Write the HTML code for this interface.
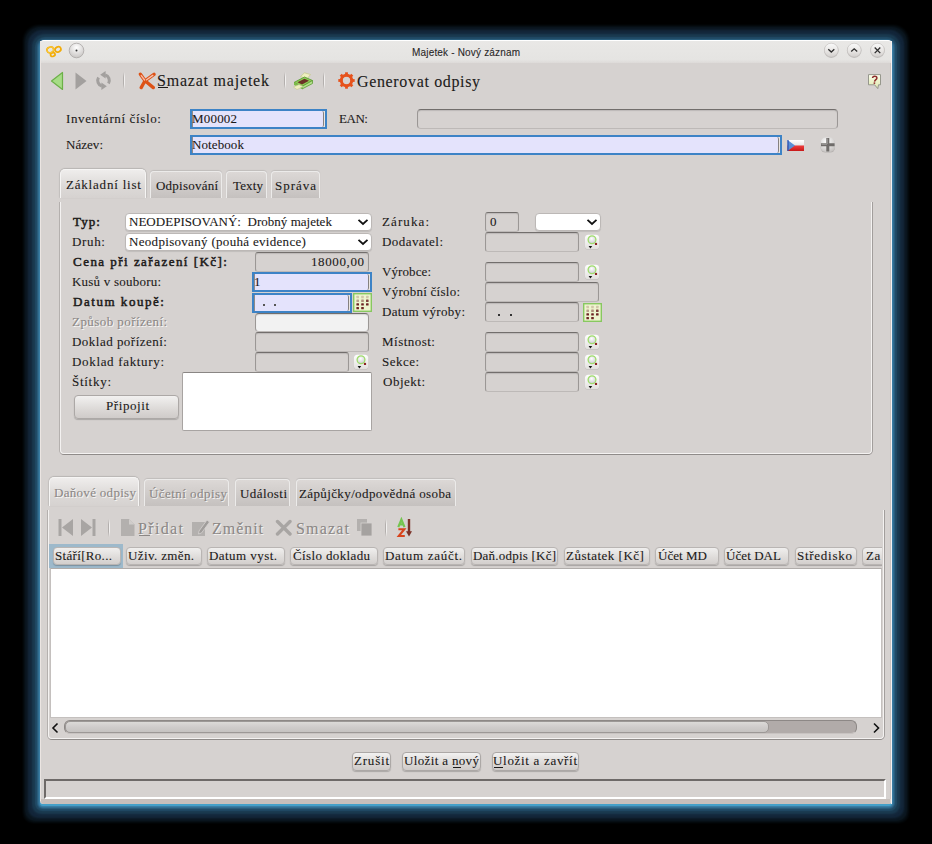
<!DOCTYPE html>
<html><head><meta charset="utf-8"><title>Majetek - Nový záznam</title>
<style>
html,body{margin:0;padding:0;width:932px;height:844px;overflow:hidden;background:#000;font-family:'Liberation Serif', serif}
body div{position:absolute}
.t{white-space:pre;-webkit-text-stroke:0.1px currentColor}
</style></head><body>
<div style="left:40px;top:40px;width:852px;height:764px;box-shadow:0 2px 0 0 #44a0c8,0 2px 1px 1px #3b7fa6,0 2px 1px 2px #326f93,0 2px 1px 3px #2a5c7c,0 2px 1px 5px #214a64,0 2px 2px 8px #1a3a50,0 2px 2px 12px #13263a,0 2px 2px 15px #0c1822,0 2px 2px 17px #060c10;border-radius:5px 5px 3px 3px;background:#d6d2d0"></div>
<div style="left:40px;top:40px;width:852px;height:23px;background:linear-gradient(#e9e8e6,#e5e4e2 85%,#dddad8);border-radius:4px 4px 0 0;border-top:1px solid #fff;box-sizing:border-box"></div>
<div style="left:40px;top:41px;width:1px;height:760px;background:#ebe5e2"></div>
<div style="left:890px;top:63px;width:1px;height:736px;background:#cbc4c0"></div>
<div style="left:891px;top:41px;width:1px;height:763px;background:#f4f2f1"></div>
<div style="left:41px;top:799px;width:849px;height:5px;background:#c6bfbb;border-radius:0 0 0 3px"></div>
<svg style="position:absolute;left:44px;top:43px" width="20" height="17" viewBox="0 0 20 17"><g fill="none" stroke="#f2ac0a" stroke-width="1.7">
<ellipse cx="6.3" cy="6.9" rx="3.4" ry="2.9" transform="rotate(-20 6.3 6.9)"/><ellipse cx="14" cy="6.4" rx="3" ry="2.5" transform="rotate(-25 14 6.4)"/><ellipse cx="8.8" cy="11.6" rx="2.3" ry="1.8" transform="rotate(-20 8.8 11.6)"/></g>
<g fill="none" stroke="#ffd84a" stroke-width="0.6"><ellipse cx="6.3" cy="6.9" rx="3.4" ry="2.9" transform="rotate(-20 6.3 6.9)"/></g></svg>
<svg style="position:absolute;left:68px;top:42px" width="17" height="17" viewBox="0 0 17 17"><defs><radialGradient id="rg1" cx="50%" cy="30%" r="70%"><stop offset="0" stop-color="#ffffff"/><stop offset="1" stop-color="#c9c6c4"/></radialGradient></defs>
<circle cx="8.5" cy="8.5" r="7.3" fill="url(#rg1)" stroke="#a9a6a4" stroke-width="0.8"/><circle cx="8.5" cy="8.5" r="1" fill="#333"/></svg>
<svg style="position:absolute;left:823px;top:42px" width="16" height="17" viewBox="0 0 16 17"><defs><linearGradient id="rgwmin" x1="0" y1="0" x2="0" y2="1"><stop offset="0" stop-color="#fafafa"/><stop offset="0.6" stop-color="#e6e4e2"/><stop offset="1" stop-color="#d2cfcd"/></linearGradient></defs>
<circle cx="8.3" cy="8.6" r="7.3" fill="#9e9b99" opacity="0.55"/><circle cx="8.3" cy="8.1" r="6.9" fill="url(#rgwmin)" stroke="#c2bfbd" stroke-width="0.5"/><g transform="translate(0.3,0)"><polyline points="5,7.2 8,10 11,7.2" fill="none" stroke="#2e2e2e" stroke-width="1.3"/></g></svg>
<svg style="position:absolute;left:846px;top:42px" width="16" height="17" viewBox="0 0 16 17"><defs><linearGradient id="rgwmax" x1="0" y1="0" x2="0" y2="1"><stop offset="0" stop-color="#fafafa"/><stop offset="0.6" stop-color="#e6e4e2"/><stop offset="1" stop-color="#d2cfcd"/></linearGradient></defs>
<circle cx="8.2" cy="8.6" r="7.3" fill="#9e9b99" opacity="0.55"/><circle cx="8.2" cy="8.1" r="6.9" fill="url(#rgwmax)" stroke="#c2bfbd" stroke-width="0.5"/><g transform="translate(0.2,0)"><polyline points="5,9.6 8,6.8 11,9.6" fill="none" stroke="#2e2e2e" stroke-width="1.3"/></g></svg>
<svg style="position:absolute;left:869px;top:42px" width="16" height="17" viewBox="0 0 16 17"><defs><linearGradient id="rgwclose" x1="0" y1="0" x2="0" y2="1"><stop offset="0" stop-color="#fafafa"/><stop offset="0.6" stop-color="#e6e4e2"/><stop offset="1" stop-color="#d2cfcd"/></linearGradient></defs>
<circle cx="8.5" cy="8.6" r="7.3" fill="#9e9b99" opacity="0.55"/><circle cx="8.5" cy="8.1" r="6.9" fill="url(#rgwclose)" stroke="#c2bfbd" stroke-width="0.5"/><g transform="translate(0.5,0)"><path d="M5.2,5.5 L10.8,11.1 M10.8,5.5 L5.2,11.1" stroke="#2e2e2e" stroke-width="1.3"/></g></svg>
<div class="t" style="left:412px;top:48px;font-family:'Liberation Sans', sans-serif;font-size:10px;line-height:10px;color:#2a2828;letter-spacing:0.18px;">Majetek - Nový záznam</div>
<svg style="position:absolute;left:50px;top:71px" width="14" height="20" viewBox="0 0 14 20"><polygon points="1.5,10 12.5,1.5 12.5,18.5" fill="#a6dc86" stroke="#6cb048" stroke-width="1.2" stroke-linejoin="round"/></svg>
<svg style="position:absolute;left:74px;top:71px" width="14" height="20" viewBox="0 0 14 20"><polygon points="1.5,1.5 12.5,10 1.5,18.5" fill="#a3a09e"/></svg>
<svg style="position:absolute;left:95px;top:71px" width="18" height="19" viewBox="0 0 18 19"><g fill="none" stroke="#a3a09e" stroke-width="3">
<path d="M10.2,3.9 A5.8,5.8 0 0 1 13.5,12.4"/><path d="M6.8,15.1 A5.8,5.8 0 0 1 3.5,6.6"/></g>
<polygon points="5.2,3.7 10.6,0 10.6,7.4" fill="#a3a09e"/><polygon points="11.8,15.3 6.4,11.6 6.4,19" fill="#a3a09e"/></svg>
<div style="left:123px;top:72px;width:1px;height:17px;background:linear-gradient(#d6d2d0,#b3afad 30%,#b3afad 70%,#d6d2d0)"></div>
<div style="left:124px;top:72px;width:1px;height:17px;background:linear-gradient(#d6d2d0,#f2f0ef 30%,#f2f0ef 70%,#d6d2d0)"></div>
<svg style="position:absolute;left:138px;top:72px" width="18" height="18" viewBox="0 0 18 18"><g fill="none" stroke-linecap="round" stroke-linejoin="round">
<path d="M2.4,2.2 L7,8.8 L15.3,15.6 M16,2.3 L7,8.8 L3.2,15.6" stroke="#dd5216" stroke-width="3.3"/>
<path d="M3.3,3.6 L6.6,8" stroke="#f7b8a4" stroke-width="1.4"/><path d="M14.8,3.4 L8.6,7.8" stroke="#f6c2ae" stroke-width="1.4"/></g></svg>
<div class="t" style="left:157px;top:73px;font-family:'Liberation Serif', serif;font-size:16px;line-height:16px;color:#1c1a19;letter-spacing:0.79px;">Smazat majetek</div>
<div style="left:158px;top:87px;width:10px;height:1px;background:#1c1a19"></div>
<div style="left:284px;top:72px;width:1px;height:17px;background:linear-gradient(#d6d2d0,#b3afad 30%,#b3afad 70%,#d6d2d0)"></div>
<div style="left:285px;top:72px;width:1px;height:17px;background:linear-gradient(#d6d2d0,#f2f0ef 30%,#f2f0ef 70%,#d6d2d0)"></div>
<svg style="position:absolute;left:293px;top:72px" width="21" height="18" viewBox="0 0 21 18"><polygon points="7.5,4.5 11.5,0.8 17.5,2.5 14,7" fill="#eef0c0" stroke="#c4c890" stroke-width="0.8"/>
<polygon points="1,10.5 11.5,5 19.5,8.5 9,14.5" fill="#90cc58" stroke="#5c9c34" stroke-width="0.9" stroke-linejoin="round"/>
<polygon points="4.5,10.3 11.5,6.8 16,8.8 9,12.6" fill="#6c3226"/>
<polygon points="9,14.5 19.5,8.5 19.5,11.5 9,17" fill="#b4e08a" stroke="#5c9c34" stroke-width="0.8" stroke-linejoin="round"/>
<polygon points="1,10.5 9,14.5 9,17 1,13" fill="#7cbc48"/>
<polygon points="0.5,15 6,12.6 10,14.6 4,17.6" fill="#eef0c0" stroke="#c4c890" stroke-width="0.6"/></svg>
<div style="left:323px;top:72px;width:1px;height:17px;background:linear-gradient(#d6d2d0,#b3afad 30%,#b3afad 70%,#d6d2d0)"></div>
<div style="left:324px;top:72px;width:1px;height:17px;background:linear-gradient(#d6d2d0,#f2f0ef 30%,#f2f0ef 70%,#d6d2d0)"></div>
<svg style="position:absolute;left:338px;top:72px" width="17" height="17" viewBox="0 0 17 17"><rect x="7.1" y="0.3" width="2.8" height="4" fill="#e6521c" transform="rotate(0 8.5 8.5)"/><rect x="7.1" y="0.3" width="2.8" height="4" fill="#e6521c" transform="rotate(45 8.5 8.5)"/><rect x="7.1" y="0.3" width="2.8" height="4" fill="#e6521c" transform="rotate(90 8.5 8.5)"/><rect x="7.1" y="0.3" width="2.8" height="4" fill="#e6521c" transform="rotate(135 8.5 8.5)"/><rect x="7.1" y="0.3" width="2.8" height="4" fill="#e6521c" transform="rotate(180 8.5 8.5)"/><rect x="7.1" y="0.3" width="2.8" height="4" fill="#e6521c" transform="rotate(225 8.5 8.5)"/><rect x="7.1" y="0.3" width="2.8" height="4" fill="#e6521c" transform="rotate(270 8.5 8.5)"/><rect x="7.1" y="0.3" width="2.8" height="4" fill="#e6521c" transform="rotate(315 8.5 8.5)"/><circle cx="8.5" cy="8.5" r="5.2" fill="none" stroke="#e6521c" stroke-width="3"/></svg>
<div class="t" style="left:357px;top:74px;font-family:'Liberation Serif', serif;font-size:16px;line-height:16px;color:#1c1a19;letter-spacing:0.65px;">Generovat odpisy</div>
<svg style="position:absolute;left:866px;top:73px" width="17" height="17" viewBox="0 0 17 17"><defs><linearGradient id="hlg" x1="0" y1="0" x2="0" y2="1"><stop offset="0" stop-color="#fbfdf0"/><stop offset="0.45" stop-color="#eef4cc"/><stop offset="1" stop-color="#dfe8b4"/></linearGradient></defs>
<path d="M2.5,1.6 H14.5 V11.8 H12.5 L11.8,15.6 L8.6,11.8 H2.5 Z" fill="url(#hlg)" stroke="#8d8f84" stroke-width="0.9" stroke-linejoin="round"/>
<path d="M6.6,5 C6.6,2.8 10.9,2.6 10.9,4.9 C10.9,6.5 8.8,6.6 8.5,8.6" fill="none" stroke="#8e2c2c" stroke-width="1.5"/>
<circle cx="8.4" cy="10.1" r="0.95" fill="#8e2c2c"/></svg>
<div class="t" style="left:66px;top:112px;font-family:'Liberation Serif', serif;font-size:13px;line-height:13px;color:#1c1a19;letter-spacing:0.63px;">Inventární číslo:</div>
<div style="left:190px;top:109px;width:137px;height:20px;box-sizing:border-box;background:#3d83c6"></div>
<div style="left:192px;top:111px;width:133px;height:16px;background:#ebe6e2"></div>
<div style="left:192px;top:111px;width:132px;height:16px;box-sizing:border-box;background:#e4e3fc;border-left:1px solid #8e8a88;border-right:1px solid #858180;border-radius:0 2px 2px 0"></div>
<div class="t" style="left:192px;top:112px;font-family:'Liberation Serif', serif;font-size:13px;line-height:13px;color:#1c1a19;letter-spacing:0.19px;">M00002</div>
<div class="t" style="left:339px;top:112px;font-family:'Liberation Serif', serif;font-size:13px;line-height:13px;color:#1c1a19;letter-spacing:-0.45px;">EAN:</div>
<div style="left:417px;top:109px;width:421px;height:20px;box-sizing:border-box;background:#d6d2d0;border-radius:4px;border:1px solid #9b9795;border-top-color:#726e6c;border-bottom-color:#bdb9b7;box-shadow:inset 0 1px 1px rgba(0,0,0,.12)"></div>
<div class="t" style="left:66px;top:138px;font-family:'Liberation Serif', serif;font-size:13px;line-height:13px;color:#1c1a19;letter-spacing:0.04px;">Název:</div>
<div style="left:190px;top:135px;width:592px;height:20px;box-sizing:border-box;background:#3d83c6"></div>
<div style="left:192px;top:137px;width:588px;height:16px;background:#ebe6e2"></div>
<div style="left:192px;top:137px;width:587px;height:16px;box-sizing:border-box;background:#e4e3fc;border-left:1px solid #8e8a88;border-right:1px solid #858180;border-radius:0 2px 2px 0"></div>
<div class="t" style="left:192px;top:138px;font-family:'Liberation Serif', serif;font-size:13px;line-height:13px;color:#1c1a19;letter-spacing:0.10px;">Notebook</div>
<svg style="position:absolute;left:787px;top:139px" width="18" height="13" viewBox="0 0 18 13"><defs><linearGradient id="flw" x1="0" y1="0" x2="0" y2="1"><stop offset="0" stop-color="#ffffff"/><stop offset="1" stop-color="#e6e6e6"/></linearGradient>
<linearGradient id="flr" x1="0" y1="0" x2="0" y2="1"><stop offset="0" stop-color="#f04040"/><stop offset="1" stop-color="#c81818"/></linearGradient></defs>
<rect x="0.5" y="1" width="16.5" height="5.5" fill="url(#flw)"/><rect x="0.5" y="6.5" width="16.5" height="5.5" fill="url(#flr)"/>
<polygon points="0.5,1 8,6.5 0.5,12" fill="#5b8fd6"/><rect x="0.5" y="1" width="1" height="11" fill="#1b40a8"/></svg>
<svg style="position:absolute;left:819px;top:136px" width="18" height="18" viewBox="0 0 18 18"><defs><radialGradient id="plg" cx="40%" cy="30%" r="75%"><stop offset="0" stop-color="#ffffff"/><stop offset="1" stop-color="#c4c1bf"/></radialGradient></defs>
<rect x="1.6" y="2.2" width="14.4" height="14.4" rx="5" fill="#9d9a98" opacity="0.6"/>
<rect x="1.6" y="1.6" width="14.4" height="14.4" rx="5" fill="url(#plg)"/>
<path d="M8.8,2 V15.6 M2,8.8 H15.6" stroke="#6f6c6a" stroke-width="3"/>
<path d="M8.2,2.5 V8 M2.5,8.2 H8" stroke="#b0adab" stroke-width="0.8"/></svg>
<div style="left:60px;top:202px;width:812px;height:252px;box-sizing:border-box;border-radius:0 0 4px 4px;border:1px solid #f4f2f1;border-top:none;box-shadow:-1px 0 0 #b4b0ae, 0 1px 0 #8f8b89, 1px 0 0 #a29e9c"></div>
<div style="left:150px;top:171px;width:72px;height:27px;box-sizing:border-box;border-radius:4px 4px 0 0;background:linear-gradient(#dcd8d6,#ccc8c6 70%,#c5c1bf);border:1px solid #ecebea;border-bottom:none;box-shadow:0 -1px 1px rgba(0,0,0,.10)"></div>
<div style="left:226px;top:171px;width:41px;height:27px;box-sizing:border-box;border-radius:4px 4px 0 0;background:linear-gradient(#dcd8d6,#ccc8c6 70%,#c5c1bf);border:1px solid #ecebea;border-bottom:none;box-shadow:0 -1px 1px rgba(0,0,0,.10)"></div>
<div style="left:271px;top:171px;width:49px;height:27px;box-sizing:border-box;border-radius:4px 4px 0 0;background:linear-gradient(#dcd8d6,#ccc8c6 70%,#c5c1bf);border:1px solid #ecebea;border-bottom:none;box-shadow:0 -1px 1px rgba(0,0,0,.10)"></div>
<div style="left:60px;top:169px;width:86px;height:29px;box-sizing:border-box;border-radius:5px 5px 0 0;background:linear-gradient(#efedec,#dcd9d7 60%,#d6d2d0);border:1px solid #f6f5f4;border-bottom:none;box-shadow:0 -1px 1px rgba(0,0,0,.12), -1px 0 1px rgba(0,0,0,.08), 1px 0 1px rgba(0,0,0,.08)"></div>
<div class="t" style="left:66px;top:178px;font-family:'Liberation Serif', serif;font-size:13px;line-height:13px;color:#1c1a19;letter-spacing:0.80px;">Základní list</div>
<div class="t" style="left:156px;top:179px;font-family:'Liberation Serif', serif;font-size:13px;line-height:13px;color:#1c1a19;letter-spacing:0.23px;">Odpisování</div>
<div class="t" style="left:233px;top:179px;font-family:'Liberation Serif', serif;font-size:13px;line-height:13px;color:#1c1a19;letter-spacing:0.14px;">Texty</div>
<div class="t" style="left:275px;top:179px;font-family:'Liberation Serif', serif;font-size:13px;line-height:13px;color:#1c1a19;letter-spacing:0.98px;">Správa</div>
<div class="t" style="left:73px;top:215px;font-family:'Liberation Serif', serif;font-size:13px;line-height:13px;color:#1c1a19;letter-spacing:1.11px;-webkit-text-stroke:0.5px currentColor;">Typ:</div>
<div style="left:125px;top:213px;width:247px;height:18px;box-sizing:border-box;background:#fff;border-radius:4px;border:1px solid #bcb8b6;box-shadow:0 1px 1px rgba(0,0,0,.10)"></div>
<svg style="position:absolute;left:357px;top:218px" width="12" height="8" viewBox="0 0 12 8"><polyline points="1.5,1.8 6,6 10.5,1.8" fill="none" stroke="#111" stroke-width="1.8"/></svg>
<div class="t" style="left:129px;top:215px;font-family:'Liberation Serif', serif;font-size:13px;line-height:13px;color:#1c1a19;letter-spacing:0.02px;">NEODEPISOVANÝ:  Drobný majetek</div>
<div class="t" style="left:72px;top:235px;font-family:'Liberation Serif', serif;font-size:13px;line-height:13px;color:#1c1a19;letter-spacing:0.66px;">Druh:</div>
<div style="left:125px;top:233px;width:247px;height:18px;box-sizing:border-box;background:#fff;border-radius:4px;border:1px solid #bcb8b6;box-shadow:0 1px 1px rgba(0,0,0,.10)"></div>
<svg style="position:absolute;left:357px;top:238px" width="12" height="8" viewBox="0 0 12 8"><polyline points="1.5,1.8 6,6 10.5,1.8" fill="none" stroke="#111" stroke-width="1.8"/></svg>
<div class="t" style="left:129px;top:235px;font-family:'Liberation Serif', serif;font-size:13px;line-height:13px;color:#1c1a19;letter-spacing:0.31px;">Neodpisovaný (pouhá evidence)</div>
<div class="t" style="left:73px;top:255px;font-family:'Liberation Serif', serif;font-size:13px;line-height:13px;color:#1c1a19;letter-spacing:1.47px;-webkit-text-stroke:0.5px currentColor;">Cena při zařazení [Kč]:</div>
<div style="left:255px;top:252px;width:114px;height:20px;box-sizing:border-box;background:#d6d2d0;border-radius:3px;border:1px solid #9b9795;border-top-color:#726e6c;border-bottom-color:#bdb9b7;box-shadow:inset 0 1px 1px rgba(0,0,0,.12)"></div>
<div class="t" style="left:311px;top:255px;font-family:'Liberation Serif', serif;font-size:13px;line-height:13px;color:#1c1a19;letter-spacing:0.61px;">18000,00</div>
<div class="t" style="left:72px;top:275px;font-family:'Liberation Serif', serif;font-size:13px;line-height:13px;color:#1c1a19;letter-spacing:0.22px;">Kusů v souboru:</div>
<div style="left:252px;top:272px;width:120px;height:20px;box-sizing:border-box;background:#3d83c6"></div>
<div style="left:254px;top:274px;width:116px;height:16px;background:#ebe6e2"></div>
<div style="left:254px;top:274px;width:115px;height:16px;box-sizing:border-box;background:#e4e3fc;border-left:1px solid #8e8a88;border-right:1px solid #858180;border-radius:0 2px 2px 0"></div>
<div class="t" style="left:254px;top:275px;font-family:'Liberation Serif', serif;font-size:13px;line-height:13px;color:#1c1a19;letter-spacing:0.00px;">1</div>
<div class="t" style="left:73px;top:295px;font-family:'Liberation Serif', serif;font-size:13px;line-height:13px;color:#1c1a19;letter-spacing:1.54px;-webkit-text-stroke:0.5px currentColor;">Datum koupě:</div>
<div style="left:252px;top:293px;width:100px;height:20px;box-sizing:border-box;background:#3d83c6"></div>
<div style="left:254px;top:295px;width:96px;height:16px;background:#ebe6e2"></div>
<div style="left:254px;top:295px;width:95px;height:16px;box-sizing:border-box;background:#e4e3fc;border-left:1px solid #8e8a88;border-right:1px solid #858180;border-radius:0 2px 2px 0"></div>
<svg style="position:absolute;left:353px;top:293px" width="19" height="19" viewBox="0 0 19 19"><rect x="0.7" y="0.7" width="17.6" height="17.6" fill="#eef4cf" stroke="#88c860" stroke-width="1.4"/><rect x="3.4" y="2.8" width="2.6" height="2.4" rx="0.5" fill="#6e2424" opacity="0.22"/><rect x="8.2" y="2.8" width="2.6" height="2.4" rx="0.5" fill="#6e2424" opacity="0.22"/><rect x="13.0" y="2.8" width="2.6" height="2.4" rx="0.5" fill="#6e2424" opacity="0.22"/><rect x="3.4" y="6.5" width="2.6" height="2.4" rx="0.5" fill="#6e2424" opacity="0.4"/><rect x="8.2" y="6.5" width="2.6" height="2.4" rx="0.5" fill="#6e2424" opacity="0.5"/><rect x="13.0" y="6.5" width="2.6" height="2.4" rx="0.5" fill="#6e2424" opacity="0.85"/><rect x="3.4" y="10.2" width="2.6" height="2.4" rx="0.5" fill="#6e2424" opacity="1"/><rect x="8.2" y="10.2" width="2.6" height="2.4" rx="0.5" fill="#6e2424" opacity="1"/><rect x="13.0" y="10.2" width="2.6" height="2.4" rx="0.5" fill="#6e2424" opacity="1"/><rect x="3.4" y="13.9" width="2.6" height="2.4" rx="0.5" fill="#6e2424" opacity="1"/><rect x="8.2" y="13.9" width="2.6" height="2.4" rx="0.5" fill="#6e2424" opacity="1"/></svg>
<div style="left:263px;top:304px;width:2px;height:2px;background:#555"></div><div style="left:274px;top:304px;width:2px;height:2px;background:#555"></div>
<div class="t" style="left:72px;top:315px;font-family:'Liberation Serif', serif;font-size:13px;line-height:13px;color:#8c8886;letter-spacing:0.44px;text-shadow:1px 1px 0 #f7f6f5">Způsob pořízení:</div>
<div style="left:255px;top:313px;width:114px;height:19px;box-sizing:border-box;background:#f2f2f2;border-radius:4px;border:1px solid #9b9795;border-top-color:#726e6c;border-bottom-color:#bdb9b7;box-shadow:inset 0 1px 1px rgba(0,0,0,.12)"></div>
<div class="t" style="left:72px;top:335px;font-family:'Liberation Serif', serif;font-size:13px;line-height:13px;color:#1c1a19;letter-spacing:0.48px;">Doklad pořízení:</div>
<div style="left:255px;top:332px;width:114px;height:20px;box-sizing:border-box;background:#d6d2d0;border-radius:3px;border:1px solid #9b9795;border-top-color:#726e6c;border-bottom-color:#bdb9b7;box-shadow:inset 0 1px 1px rgba(0,0,0,.12)"></div>
<div class="t" style="left:72px;top:355px;font-family:'Liberation Serif', serif;font-size:13px;line-height:13px;color:#1c1a19;letter-spacing:0.67px;">Doklad faktury:</div>
<div style="left:255px;top:352px;width:94px;height:20px;box-sizing:border-box;background:#d6d2d0;border-radius:3px;border:1px solid #9b9795;border-top-color:#726e6c;border-bottom-color:#bdb9b7;box-shadow:inset 0 1px 1px rgba(0,0,0,.12)"></div>
<svg style="position:absolute;left:353px;top:354px" width="17" height="17" viewBox="0 0 17 17"><defs><linearGradient id="sbg" x1="0" y1="0" x2="0" y2="1"><stop offset="0" stop-color="#fefefe"/><stop offset="1" stop-color="#e2e0de"/></linearGradient>
<radialGradient id="sbm" cx="45%" cy="35%" r="60%"><stop offset="0" stop-color="#ffffff"/><stop offset="1" stop-color="#cfcfd4"/></radialGradient></defs>
<rect x="0.9" y="1.2" width="14.4" height="14.6" rx="3.5" fill="#a8a4a2" opacity="0.6"/>
<rect x="0.9" y="0.8" width="14.4" height="14.4" rx="3.5" fill="url(#sbg)"/>
<circle cx="8" cy="5.8" r="3.9" fill="url(#sbm)" stroke="#9edc6a" stroke-width="1.3"/>
<circle cx="12" cy="9.9" r="1.2" fill="#8a2020"/>
<polygon points="4.6,11.9 8.2,11.9 6.4,14.6" fill="#111"/></svg>
<div class="t" style="left:72px;top:375px;font-family:'Liberation Serif', serif;font-size:13px;line-height:13px;color:#1c1a19;letter-spacing:0.72px;">Štítky:</div>
<div style="left:182px;top:372px;width:190px;height:59px;box-sizing:border-box;background:#fff;border:1px solid #a8a4a2;border-top-color:#8a8684;border-radius:2px"></div>
<div style="left:74px;top:395px;width:105px;height:24px;box-sizing:border-box;border-radius:4px;background:linear-gradient(#f2f1f0,#dcd9d7 60%,#cfcbc9);border:1px solid #aca8a6;box-shadow:0 1px 1px rgba(0,0,0,.2)"></div>
<div class="t" style="left:106px;top:399px;font-family:'Liberation Serif', serif;font-size:13px;line-height:13px;color:#1c1a19;letter-spacing:0.57px;">Připojit</div>
<div class="t" style="left:382px;top:215px;font-family:'Liberation Serif', serif;font-size:13px;line-height:13px;color:#1c1a19;letter-spacing:1.10px;">Záruka:</div>
<div style="left:485px;top:212px;width:34px;height:20px;box-sizing:border-box;background:#d6d2d0;border-radius:3px;border:1px solid #9b9795;border-top-color:#726e6c;border-bottom-color:#bdb9b7;box-shadow:inset 0 1px 1px rgba(0,0,0,.12)"></div>
<div class="t" style="left:490px;top:215px;font-family:'Liberation Serif', serif;font-size:13px;line-height:13px;color:#1c1a19;letter-spacing:0.00px;">0</div>
<div style="left:535px;top:213px;width:66px;height:18px;box-sizing:border-box;background:#fff;border-radius:4px;border:1px solid #bcb8b6;box-shadow:0 1px 1px rgba(0,0,0,.10)"></div>
<svg style="position:absolute;left:586px;top:218px" width="12" height="8" viewBox="0 0 12 8"><polyline points="1.5,1.8 6,6 10.5,1.8" fill="none" stroke="#111" stroke-width="1.8"/></svg>
<div class="t" style="left:382px;top:235px;font-family:'Liberation Serif', serif;font-size:13px;line-height:13px;color:#1c1a19;letter-spacing:0.44px;">Dodavatel:</div>
<div style="left:485px;top:232px;width:94px;height:20px;box-sizing:border-box;background:#d6d2d0;border-radius:3px;border:1px solid #9b9795;border-top-color:#726e6c;border-bottom-color:#bdb9b7;box-shadow:inset 0 1px 1px rgba(0,0,0,.12)"></div>
<svg style="position:absolute;left:584px;top:234px" width="17" height="17" viewBox="0 0 17 17"><defs><linearGradient id="sbg" x1="0" y1="0" x2="0" y2="1"><stop offset="0" stop-color="#fefefe"/><stop offset="1" stop-color="#e2e0de"/></linearGradient>
<radialGradient id="sbm" cx="45%" cy="35%" r="60%"><stop offset="0" stop-color="#ffffff"/><stop offset="1" stop-color="#cfcfd4"/></radialGradient></defs>
<rect x="0.9" y="1.2" width="14.4" height="14.6" rx="3.5" fill="#a8a4a2" opacity="0.6"/>
<rect x="0.9" y="0.8" width="14.4" height="14.4" rx="3.5" fill="url(#sbg)"/>
<circle cx="8" cy="5.8" r="3.9" fill="url(#sbm)" stroke="#9edc6a" stroke-width="1.3"/>
<circle cx="12" cy="9.9" r="1.2" fill="#8a2020"/>
<polygon points="4.6,11.9 8.2,11.9 6.4,14.6" fill="#111"/></svg>
<div class="t" style="left:382px;top:265px;font-family:'Liberation Serif', serif;font-size:13px;line-height:13px;color:#1c1a19;letter-spacing:0.09px;">Výrobce:</div>
<div style="left:485px;top:262px;width:94px;height:20px;box-sizing:border-box;background:#d6d2d0;border-radius:3px;border:1px solid #9b9795;border-top-color:#726e6c;border-bottom-color:#bdb9b7;box-shadow:inset 0 1px 1px rgba(0,0,0,.12)"></div>
<svg style="position:absolute;left:584px;top:264px" width="17" height="17" viewBox="0 0 17 17"><defs><linearGradient id="sbg" x1="0" y1="0" x2="0" y2="1"><stop offset="0" stop-color="#fefefe"/><stop offset="1" stop-color="#e2e0de"/></linearGradient>
<radialGradient id="sbm" cx="45%" cy="35%" r="60%"><stop offset="0" stop-color="#ffffff"/><stop offset="1" stop-color="#cfcfd4"/></radialGradient></defs>
<rect x="0.9" y="1.2" width="14.4" height="14.6" rx="3.5" fill="#a8a4a2" opacity="0.6"/>
<rect x="0.9" y="0.8" width="14.4" height="14.4" rx="3.5" fill="url(#sbg)"/>
<circle cx="8" cy="5.8" r="3.9" fill="url(#sbm)" stroke="#9edc6a" stroke-width="1.3"/>
<circle cx="12" cy="9.9" r="1.2" fill="#8a2020"/>
<polygon points="4.6,11.9 8.2,11.9 6.4,14.6" fill="#111"/></svg>
<div class="t" style="left:382px;top:285px;font-family:'Liberation Serif', serif;font-size:13px;line-height:13px;color:#1c1a19;letter-spacing:0.25px;">Výrobní číslo:</div>
<div style="left:485px;top:282px;width:114px;height:20px;box-sizing:border-box;background:#d6d2d0;border-radius:3px;border:1px solid #9b9795;border-top-color:#726e6c;border-bottom-color:#bdb9b7;box-shadow:inset 0 1px 1px rgba(0,0,0,.12)"></div>
<div class="t" style="left:382px;top:305px;font-family:'Liberation Serif', serif;font-size:13px;line-height:13px;color:#1c1a19;letter-spacing:0.33px;">Datum výroby:</div>
<div style="left:485px;top:302px;width:94px;height:20px;box-sizing:border-box;background:#d6d2d0;border-radius:3px;border:1px solid #9b9795;border-top-color:#726e6c;border-bottom-color:#bdb9b7;box-shadow:inset 0 1px 1px rgba(0,0,0,.12)"></div>
<svg style="position:absolute;left:583px;top:303px" width="19" height="19" viewBox="0 0 19 19"><rect x="0.7" y="0.7" width="17.6" height="17.6" fill="#eef4cf" stroke="#88c860" stroke-width="1.4"/><rect x="3.4" y="2.8" width="2.6" height="2.4" rx="0.5" fill="#6e2424" opacity="0.22"/><rect x="8.2" y="2.8" width="2.6" height="2.4" rx="0.5" fill="#6e2424" opacity="0.22"/><rect x="13.0" y="2.8" width="2.6" height="2.4" rx="0.5" fill="#6e2424" opacity="0.22"/><rect x="3.4" y="6.5" width="2.6" height="2.4" rx="0.5" fill="#6e2424" opacity="0.4"/><rect x="8.2" y="6.5" width="2.6" height="2.4" rx="0.5" fill="#6e2424" opacity="0.5"/><rect x="13.0" y="6.5" width="2.6" height="2.4" rx="0.5" fill="#6e2424" opacity="0.85"/><rect x="3.4" y="10.2" width="2.6" height="2.4" rx="0.5" fill="#6e2424" opacity="1"/><rect x="8.2" y="10.2" width="2.6" height="2.4" rx="0.5" fill="#6e2424" opacity="1"/><rect x="13.0" y="10.2" width="2.6" height="2.4" rx="0.5" fill="#6e2424" opacity="1"/><rect x="3.4" y="13.9" width="2.6" height="2.4" rx="0.5" fill="#6e2424" opacity="1"/><rect x="8.2" y="13.9" width="2.6" height="2.4" rx="0.5" fill="#6e2424" opacity="1"/></svg>
<div style="left:498px;top:314px;width:2px;height:2px;background:#333"></div><div style="left:510px;top:314px;width:2px;height:2px;background:#333"></div>
<div class="t" style="left:382px;top:335px;font-family:'Liberation Serif', serif;font-size:13px;line-height:13px;color:#1c1a19;letter-spacing:0.48px;">Místnost:</div>
<div style="left:485px;top:332px;width:94px;height:20px;box-sizing:border-box;background:#d6d2d0;border-radius:3px;border:1px solid #9b9795;border-top-color:#726e6c;border-bottom-color:#bdb9b7;box-shadow:inset 0 1px 1px rgba(0,0,0,.12)"></div>
<svg style="position:absolute;left:584px;top:334px" width="17" height="17" viewBox="0 0 17 17"><defs><linearGradient id="sbg" x1="0" y1="0" x2="0" y2="1"><stop offset="0" stop-color="#fefefe"/><stop offset="1" stop-color="#e2e0de"/></linearGradient>
<radialGradient id="sbm" cx="45%" cy="35%" r="60%"><stop offset="0" stop-color="#ffffff"/><stop offset="1" stop-color="#cfcfd4"/></radialGradient></defs>
<rect x="0.9" y="1.2" width="14.4" height="14.6" rx="3.5" fill="#a8a4a2" opacity="0.6"/>
<rect x="0.9" y="0.8" width="14.4" height="14.4" rx="3.5" fill="url(#sbg)"/>
<circle cx="8" cy="5.8" r="3.9" fill="url(#sbm)" stroke="#9edc6a" stroke-width="1.3"/>
<circle cx="12" cy="9.9" r="1.2" fill="#8a2020"/>
<polygon points="4.6,11.9 8.2,11.9 6.4,14.6" fill="#111"/></svg>
<div class="t" style="left:382px;top:355px;font-family:'Liberation Serif', serif;font-size:13px;line-height:13px;color:#1c1a19;letter-spacing:0.47px;">Sekce:</div>
<div style="left:485px;top:352px;width:94px;height:20px;box-sizing:border-box;background:#d6d2d0;border-radius:3px;border:1px solid #9b9795;border-top-color:#726e6c;border-bottom-color:#bdb9b7;box-shadow:inset 0 1px 1px rgba(0,0,0,.12)"></div>
<svg style="position:absolute;left:584px;top:354px" width="17" height="17" viewBox="0 0 17 17"><defs><linearGradient id="sbg" x1="0" y1="0" x2="0" y2="1"><stop offset="0" stop-color="#fefefe"/><stop offset="1" stop-color="#e2e0de"/></linearGradient>
<radialGradient id="sbm" cx="45%" cy="35%" r="60%"><stop offset="0" stop-color="#ffffff"/><stop offset="1" stop-color="#cfcfd4"/></radialGradient></defs>
<rect x="0.9" y="1.2" width="14.4" height="14.6" rx="3.5" fill="#a8a4a2" opacity="0.6"/>
<rect x="0.9" y="0.8" width="14.4" height="14.4" rx="3.5" fill="url(#sbg)"/>
<circle cx="8" cy="5.8" r="3.9" fill="url(#sbm)" stroke="#9edc6a" stroke-width="1.3"/>
<circle cx="12" cy="9.9" r="1.2" fill="#8a2020"/>
<polygon points="4.6,11.9 8.2,11.9 6.4,14.6" fill="#111"/></svg>
<div class="t" style="left:383px;top:375px;font-family:'Liberation Serif', serif;font-size:13px;line-height:13px;color:#1c1a19;letter-spacing:0.50px;">Objekt:</div>
<div style="left:485px;top:372px;width:94px;height:20px;box-sizing:border-box;background:#d6d2d0;border-radius:3px;border:1px solid #9b9795;border-top-color:#726e6c;border-bottom-color:#bdb9b7;box-shadow:inset 0 1px 1px rgba(0,0,0,.12)"></div>
<svg style="position:absolute;left:584px;top:374px" width="17" height="17" viewBox="0 0 17 17"><defs><linearGradient id="sbg" x1="0" y1="0" x2="0" y2="1"><stop offset="0" stop-color="#fefefe"/><stop offset="1" stop-color="#e2e0de"/></linearGradient>
<radialGradient id="sbm" cx="45%" cy="35%" r="60%"><stop offset="0" stop-color="#ffffff"/><stop offset="1" stop-color="#cfcfd4"/></radialGradient></defs>
<rect x="0.9" y="1.2" width="14.4" height="14.6" rx="3.5" fill="#a8a4a2" opacity="0.6"/>
<rect x="0.9" y="0.8" width="14.4" height="14.4" rx="3.5" fill="url(#sbg)"/>
<circle cx="8" cy="5.8" r="3.9" fill="url(#sbm)" stroke="#9edc6a" stroke-width="1.3"/>
<circle cx="12" cy="9.9" r="1.2" fill="#8a2020"/>
<polygon points="4.6,11.9 8.2,11.9 6.4,14.6" fill="#111"/></svg>
<div style="left:48px;top:510px;width:836px;height:229px;box-sizing:border-box;border-radius:0 0 4px 4px;border:1px solid #f4f2f1;border-top:none;box-shadow:-1px 0 0 #b4b0ae, 0 1px 0 #8f8b89, 1px 0 0 #a29e9c"></div>
<div style="left:144px;top:479px;width:85px;height:27px;box-sizing:border-box;border-radius:4px 4px 0 0;background:linear-gradient(#dcd8d6,#ccc8c6 70%,#c5c1bf);border:1px solid #ecebea;border-bottom:none;box-shadow:0 -1px 1px rgba(0,0,0,.10)"></div>
<div style="left:235px;top:479px;width:55px;height:27px;box-sizing:border-box;border-radius:4px 4px 0 0;background:linear-gradient(#dcd8d6,#ccc8c6 70%,#c5c1bf);border:1px solid #ecebea;border-bottom:none;box-shadow:0 -1px 1px rgba(0,0,0,.10)"></div>
<div style="left:296px;top:479px;width:160px;height:27px;box-sizing:border-box;border-radius:4px 4px 0 0;background:linear-gradient(#dcd8d6,#ccc8c6 70%,#c5c1bf);border:1px solid #ecebea;border-bottom:none;box-shadow:0 -1px 1px rgba(0,0,0,.10)"></div>
<div style="left:49px;top:477px;width:90px;height:29px;box-sizing:border-box;border-radius:5px 5px 0 0;background:linear-gradient(#efedec,#dcd9d7 60%,#d6d2d0);border:1px solid #f6f5f4;border-bottom:none;box-shadow:0 -1px 1px rgba(0,0,0,.12), -1px 0 1px rgba(0,0,0,.08), 1px 0 1px rgba(0,0,0,.08)"></div>
<div class="t" style="left:54px;top:486px;font-family:'Liberation Serif', serif;font-size:13px;line-height:13px;color:#8c8886;letter-spacing:0.30px;text-shadow:1px 1px 0 #f7f6f5">Daňové odpisy</div>
<div class="t" style="left:149px;top:487px;font-family:'Liberation Serif', serif;font-size:13px;line-height:13px;color:#8c8886;letter-spacing:0.45px;text-shadow:1px 1px 0 #f7f6f5">Účetní odpisy</div>
<div class="t" style="left:240px;top:487px;font-family:'Liberation Serif', serif;font-size:13px;line-height:13px;color:#1c1a19;letter-spacing:0.42px;">Události</div>
<div class="t" style="left:299px;top:487px;font-family:'Liberation Serif', serif;font-size:13px;line-height:13px;color:#1c1a19;letter-spacing:0.38px;">Zápůjčky/odpovědná osoba</div>
<svg style="position:absolute;left:57px;top:518px" width="18" height="19" viewBox="0 0 18 19"><rect x="1.5" y="1" width="3" height="17" fill="#a8a5a3"/><polygon points="16,1 5,9.5 16,18" fill="#a8a5a3"/></svg>
<svg style="position:absolute;left:79px;top:518px" width="18" height="19" viewBox="0 0 18 19"><rect x="13.5" y="1" width="3" height="17" fill="#a8a5a3"/><polygon points="2,1 13,9.5 2,18" fill="#a8a5a3"/></svg>
<div style="left:108px;top:519px;width:1px;height:18px;background:linear-gradient(#d6d2d0,#b3afad 30%,#b3afad 70%,#d6d2d0)"></div>
<div style="left:109px;top:519px;width:1px;height:18px;background:linear-gradient(#d6d2d0,#f2f0ef 30%,#f2f0ef 70%,#d6d2d0)"></div>
<svg style="position:absolute;left:120px;top:518px" width="16" height="19" viewBox="0 0 16 19"><path d="M1,1 H9 L14.5,6.5 V18 H1 Z" fill="#b3b0ae"/><path d="M9,1 V6.5 H14.5" fill="#d0cdcb"/></svg>
<div class="t" style="left:138px;top:521px;font-family:'Liberation Serif', serif;font-size:16px;line-height:16px;color:#8c8886;letter-spacing:1.36px;text-shadow:1px 1px 0 #f4f3f2">Přidat</div>
<div style="left:139px;top:535px;width:11px;height:1px;background:#8c8886"></div>
<svg style="position:absolute;left:191px;top:518px" width="19" height="19" viewBox="0 0 19 19"><rect x="1" y="4" width="13" height="14" fill="#b3b0ae"/><path d="M8,13 L16,2 L18.5,4 L10.5,15 L7.5,16 Z" fill="#a09d9b" stroke="#d6d2d0" stroke-width="0.8"/></svg>
<div class="t" style="left:212px;top:521px;font-family:'Liberation Serif', serif;font-size:16px;line-height:16px;color:#8c8886;letter-spacing:0.96px;text-shadow:1px 1px 0 #f4f3f2">Změnit</div>
<svg style="position:absolute;left:275px;top:519px" width="18" height="17" viewBox="0 0 18 17"><path d="M2.5,2.5 L15,15 M15,2.5 L2.5,15" stroke="#a8a5a3" stroke-width="3.4" stroke-linecap="round"/></svg>
<div class="t" style="left:296px;top:521px;font-family:'Liberation Serif', serif;font-size:16px;line-height:16px;color:#8c8886;letter-spacing:1.18px;text-shadow:1px 1px 0 #f4f3f2">Smazat</div>
<svg style="position:absolute;left:356px;top:518px" width="18" height="19" viewBox="0 0 18 19"><rect x="1" y="1" width="10" height="12" fill="#b3b0ae"/><rect x="5" y="5" width="11" height="13" fill="#a5a2a0" stroke="#d6d2d0" stroke-width="0.8"/></svg>
<div style="left:385px;top:519px;width:1px;height:18px;background:linear-gradient(#d6d2d0,#b3afad 30%,#b3afad 70%,#d6d2d0)"></div>
<div style="left:386px;top:519px;width:1px;height:18px;background:linear-gradient(#d6d2d0,#f2f0ef 30%,#f2f0ef 70%,#d6d2d0)"></div>
<svg style="position:absolute;left:396px;top:517px" width="18" height="21" viewBox="0 0 18 21"><g fill="none" stroke-linejoin="miter">
<path d="M2.3,10.2 L5.4,2.6 L8.5,10.2 M3.6,7.4 H7.2" stroke="#74c450" stroke-width="2.2"/>
<path d="M2.4,12.2 H8.3 L2.8,19 H8.8" stroke="#d8441c" stroke-width="2.1"/>
<path d="M13,2 V16" stroke="#7c3228" stroke-width="2.4"/></g>
<polygon points="10,14.2 16,14.2 13,19.6" fill="#7c3228"/></svg>
<div style="left:49px;top:544px;width:74px;height:24px;background:#9db9cb"></div>
<div style="left:53px;top:547px;width:68px;height:18px;box-sizing:border-box;border-radius:4px;background:linear-gradient(#f0efee,#dedbd9 60%,#d3cfcd);border:1px solid #b9b5b3;box-shadow:0 1px 1px rgba(0,0,0,.22)"></div>
<div class="t" style="left:55px;top:549px;font-family:'Liberation Serif', serif;font-size:13px;line-height:13px;color:#1c1a19;letter-spacing:0.32px;">Stáří[Ro...</div>
<div style="left:126px;top:547px;width:76px;height:18px;box-sizing:border-box;border-radius:4px;background:linear-gradient(#f0efee,#dedbd9 60%,#d3cfcd);border:1px solid #b9b5b3;box-shadow:0 1px 1px rgba(0,0,0,.22)"></div>
<div class="t" style="left:128px;top:549px;font-family:'Liberation Serif', serif;font-size:13px;line-height:13px;color:#1c1a19;letter-spacing:0.37px;">Uživ. změn.</div>
<div style="left:207px;top:547px;width:78px;height:18px;box-sizing:border-box;border-radius:4px;background:linear-gradient(#f0efee,#dedbd9 60%,#d3cfcd);border:1px solid #b9b5b3;box-shadow:0 1px 1px rgba(0,0,0,.22)"></div>
<div class="t" style="left:209px;top:549px;font-family:'Liberation Serif', serif;font-size:13px;line-height:13px;color:#1c1a19;letter-spacing:0.44px;">Datum vyst.</div>
<div style="left:290px;top:547px;width:88px;height:18px;box-sizing:border-box;border-radius:4px;background:linear-gradient(#f0efee,#dedbd9 60%,#d3cfcd);border:1px solid #b9b5b3;box-shadow:0 1px 1px rgba(0,0,0,.22)"></div>
<div class="t" style="left:293px;top:549px;font-family:'Liberation Serif', serif;font-size:13px;line-height:13px;color:#1c1a19;letter-spacing:0.37px;">Číslo dokladu</div>
<div style="left:383px;top:547px;width:82px;height:18px;box-sizing:border-box;border-radius:4px;background:linear-gradient(#f0efee,#dedbd9 60%,#d3cfcd);border:1px solid #b9b5b3;box-shadow:0 1px 1px rgba(0,0,0,.22)"></div>
<div class="t" style="left:385px;top:549px;font-family:'Liberation Serif', serif;font-size:13px;line-height:13px;color:#1c1a19;letter-spacing:0.70px;">Datum zaúčt.</div>
<div style="left:471px;top:547px;width:87px;height:18px;box-sizing:border-box;border-radius:4px;background:linear-gradient(#f0efee,#dedbd9 60%,#d3cfcd);border:1px solid #b9b5b3;box-shadow:0 1px 1px rgba(0,0,0,.22)"></div>
<div class="t" style="left:473px;top:549px;font-family:'Liberation Serif', serif;font-size:13px;line-height:13px;color:#1c1a19;letter-spacing:0.22px;">Daň.odpis [Kč]</div>
<div style="left:564px;top:547px;width:86px;height:18px;box-sizing:border-box;border-radius:4px;background:linear-gradient(#f0efee,#dedbd9 60%,#d3cfcd);border:1px solid #b9b5b3;box-shadow:0 1px 1px rgba(0,0,0,.22)"></div>
<div class="t" style="left:566px;top:549px;font-family:'Liberation Serif', serif;font-size:13px;line-height:13px;color:#1c1a19;letter-spacing:0.51px;">Zůstatek [Kč]</div>
<div style="left:655px;top:547px;width:64px;height:18px;box-sizing:border-box;border-radius:4px;background:linear-gradient(#f0efee,#dedbd9 60%,#d3cfcd);border:1px solid #b9b5b3;box-shadow:0 1px 1px rgba(0,0,0,.22)"></div>
<div class="t" style="left:658px;top:549px;font-family:'Liberation Serif', serif;font-size:13px;line-height:13px;color:#1c1a19;letter-spacing:0.04px;">Účet MD</div>
<div style="left:724px;top:547px;width:65px;height:18px;box-sizing:border-box;border-radius:4px;background:linear-gradient(#f0efee,#dedbd9 60%,#d3cfcd);border:1px solid #b9b5b3;box-shadow:0 1px 1px rgba(0,0,0,.22)"></div>
<div class="t" style="left:726px;top:549px;font-family:'Liberation Serif', serif;font-size:13px;line-height:13px;color:#1c1a19;letter-spacing:0.07px;">Účet DAL</div>
<div style="left:795px;top:547px;width:62px;height:18px;box-sizing:border-box;border-radius:4px;background:linear-gradient(#f0efee,#dedbd9 60%,#d3cfcd);border:1px solid #b9b5b3;box-shadow:0 1px 1px rgba(0,0,0,.22)"></div>
<div class="t" style="left:797px;top:549px;font-family:'Liberation Serif', serif;font-size:13px;line-height:13px;color:#1c1a19;letter-spacing:0.73px;">Středisko</div>
<div style="left:862px;top:547px;width:20px;height:20px;overflow:hidden"><div style="left:0;top:0;width:40px;height:18px;box-sizing:border-box;border-radius:4px;background:linear-gradient(#f0efee,#dedbd9 60%,#d3cfcd);border:1px solid #b9b5b3;box-shadow:0 1px 1px rgba(0,0,0,.22)"></div><div class="t" style="left:4px;top:2px;font-size:13px;line-height:13px;color:#1c1a19;letter-spacing:0.6px">Za</div></div>
<div style="left:50px;top:568px;width:832px;height:150px;box-sizing:border-box;background:#fff;border:1px solid #c4c0be;border-top-color:#b0acaa"></div>
<svg style="position:absolute;left:51px;top:722px" width="9" height="12" viewBox="0 0 9 12"><polyline points="6.5,1.5 2,6 6.5,10.5" fill="none" stroke="#111" stroke-width="1.6"/></svg>
<div style="left:64px;top:720px;width:793px;height:14px;box-sizing:border-box;border-radius:6px;background:#b1aba9;border:1px solid #8d8886;border-bottom-color:#c8c3c1"></div>
<div style="left:65px;top:721px;width:704px;height:12px;box-sizing:border-box;border-radius:5px;background:linear-gradient(#dcdad8,#cfcccb 50%,#c6c3c1);border:1px solid #9c9896"></div>
<svg style="position:absolute;left:872px;top:722px" width="9" height="12" viewBox="0 0 9 12"><polyline points="2,1.5 6.5,6 2,10.5" fill="none" stroke="#111" stroke-width="1.6"/></svg>
<div style="left:352px;top:752px;width:39px;height:19px;box-sizing:border-box;border-radius:4px;background:linear-gradient(#f2f1f0,#dcd9d7 60%,#cfcbc9);border:1px solid #aca8a6;box-shadow:0 1px 1px rgba(0,0,0,.2)"></div>
<div class="t" style="left:354px;top:754px;font-family:'Liberation Serif', serif;font-size:13px;line-height:13px;color:#1c1a19;letter-spacing:0.79px;">Zrušit</div>
<div style="left:402px;top:752px;width:79px;height:19px;box-sizing:border-box;border-radius:4px;background:linear-gradient(#f2f1f0,#dcd9d7 60%,#cfcbc9);border:1px solid #aca8a6;box-shadow:0 1px 1px rgba(0,0,0,.2)"></div>
<div class="t" style="left:404px;top:754px;font-family:'Liberation Serif', serif;font-size:13px;line-height:13px;color:#1c1a19;letter-spacing:0.35px;">Uložit a nový</div>
<div style="left:453px;top:767px;width:8px;height:1px;background:#1c1a19"></div>
<div style="left:492px;top:752px;width:87px;height:19px;box-sizing:border-box;border-radius:4px;background:linear-gradient(#f2f1f0,#dcd9d7 60%,#cfcbc9);border:1px solid #aca8a6;box-shadow:0 1px 1px rgba(0,0,0,.2)"></div>
<div class="t" style="left:493px;top:754px;font-family:'Liberation Serif', serif;font-size:13px;line-height:13px;color:#1c1a19;letter-spacing:0.69px;">Uložit a zavřít</div>
<div style="left:494px;top:767px;width:9px;height:1px;background:#1c1a19"></div>
<div style="left:44px;top:779px;width:842px;height:20px;box-sizing:border-box;border:1px solid #6e6a68;border-right-color:#fff;border-bottom-color:#fff;border-left-color:#6e6a68;border-top-width:2px;border-left-width:2px;border-right-width:2px;border-bottom-width:2px"></div>
</body></html>
